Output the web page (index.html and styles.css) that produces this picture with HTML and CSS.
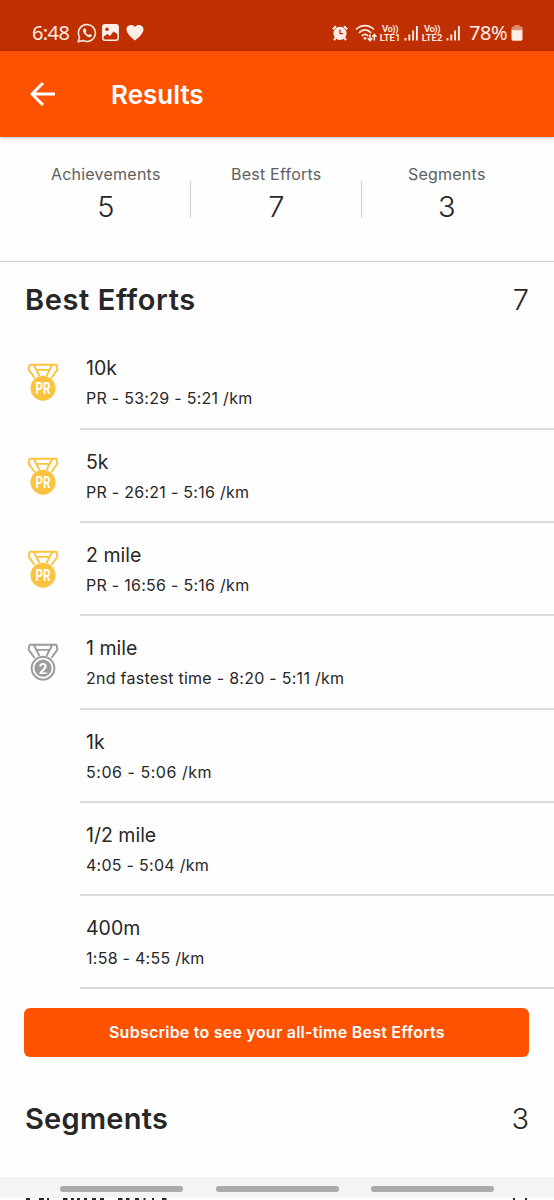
FILE: index.html
```html
<!DOCTYPE html>
<html lang="en">
<head>
<meta charset="utf-8">
<title>Results</title>
<link rel="stylesheet" href="styles.css">
</head>
<body>
<header class="status">
  <span class="clock">6:48</span>
  <svg class="i-wa" viewBox="0 0 20 20"><path d="M1.2 18.8l1.3-4.7A8.5 8.5 0 1 1 6 17.5z" fill="none" stroke="currentColor" stroke-width="1.6" stroke-linejoin="round"/><path d="M6.9 5.4c-1.5 1-1.3 3.3.6 5.5s4.3 3.7 5.700 3.300 1.900-1.500 1.600-2.100l-2.100-1.100-1.200 1.100c-1.300-.5-2.400-1.600-2.900-2.800l.9-1.100-.9-2.400c-.4-.6-1.200-.7-1.700-.4z" fill="currentColor"/></svg>
  <svg class="i-pic" viewBox="0 0 17 17"><rect x=".8" y=".8" width="15.4" height="15.4" rx="2.2" fill="none" stroke="currentColor" stroke-width="1.5"/><path d="M1 1h15v9.500l-4.500-3-3.500 4.500-2.500-2L1 13z" fill="currentColor"/><circle cx="5" cy="5.3" r="1.7" class="cut"/></svg>
  <svg class="i-heart" viewBox="0 0 18 17"><path d="M9 16.500C5 13.500.5 9.500.5 5.300.5 1 6.500-.8 9 3c2.500-3.800 8.500-2 8.500 2.300 0 4.200-4.500 8.200-8.500 11.200z" fill="currentColor"/></svg>
  <span class="grow"></span>
  <svg class="i-alarm" viewBox="0 0 16 16"><circle cx="8" cy="8.3" r="6.6" fill="currentColor"/><path d="M.8 4.200L4 1.200M15.200 4.200L12 1.200M3.800 12.500L2 15.200M12.200 12.500L14 15.200" stroke="currentColor" stroke-width="2"/><path d="M8 4.500V8.700H11" fill="none" stroke="#bf2f00" stroke-width="1.300"/></svg>
  <svg class="i-wifi" viewBox="0 0 22 18"><path d="M1 5.500C6 .2 14 .2 19 5.500M4 8.800C7.500 5 12.500 5 16 8.800M6.800 12c2-2.200 4.400-2.200 6.400 0" fill="none" stroke="currentColor" stroke-width="1.700"/><circle cx="10" cy="14.300" r="1.400" fill="currentColor"/><path d="M15 10.500v6M12.700 14.300L15 16.700l2.300-2.400M19.300 16.500v-6M17.300 12.700l2-2.300 2.200 2.300" fill="none" stroke="currentColor" stroke-width="1.500"/></svg>
  <span class="lte"><b>Vo))</b><b>LTE1</b></span>
  <svg class="i-bars" viewBox="0 0 15 16"><path d="M1.500 13v2.500M5.300 9.500v6M9.100 5.500v10M12.900 1v14.500"/></svg>
  <span class="lte"><b>Vo))</b><b>LTE2</b></span>
  <svg class="i-bars" viewBox="0 0 15 16"><path d="M1.500 13v2.500M5.300 9.500v6M9.100 5.500v10M12.900 1v14.500"/></svg>
  <span class="pct">78%</span>
  <svg class="i-batt" viewBox="0 0 12 16"><path d="M3.500 0h5v1.500H10a1.500 1.500 0 0 1 1.500 1.500v3H.5V3A1.500 1.500 0 0 1 2 1.500h1.500z" fill="currentColor" opacity=".5"/><path d="M.5 5.200h11V14A1.700 1.700 0 0 1 9.800 15.700H2.200A1.700 1.700 0 0 1 .5 14z" fill="currentColor"/></svg>
</header>

<nav class="appbar">
  <svg class="back" viewBox="0 0 26 26"><path d="M25 13H2.500M13 2L2 13l11 11" fill="none" stroke="currentColor" stroke-width="3"/></svg>
  <h1>Results</h1>
</nav>

<section class="stats">
  <div class="stat"><span class="label">Achievements</span><span class="num">5</span></div>
  <div class="stat"><span class="label">Best Efforts</span><span class="num">7</span></div>
  <div class="stat"><span class="label">Segments</span><span class="num">3</span></div>
</section>

<section class="efforts">
  <div class="head"><h2 class="wide">Best Efforts</h2><span class="num">7</span></div>
  <ul>
    <li><svg class="medal gold" viewBox="0 0 32 40"><path class="ribbon" d="M2.500 2.700H29.500L30.400 7.600L24.400 16M2.500 2.700L1.600 7.600L7.600 16M6.700 2.700L12.500 14M25.300 2.700L19.500 14M9.500 7.900H22.500"/><circle cx="16" cy="26.200" r="12.500"/><text x="16" y="32" textLength="15" lengthAdjust="spacingAndGlyphs">PR</text></svg><div class="row"><p class="name">10k</p><p class="time">PR - 53:29 - 5:21 /km</p></div></li>
    <li><svg class="medal gold" viewBox="0 0 32 40"><path class="ribbon" d="M2.500 2.700H29.500L30.400 7.600L24.400 16M2.500 2.700L1.600 7.600L7.600 16M6.700 2.700L12.500 14M25.300 2.700L19.500 14M9.500 7.900H22.500"/><circle cx="16" cy="26.200" r="12.500"/><text x="16" y="32" textLength="15" lengthAdjust="spacingAndGlyphs">PR</text></svg><div class="row"><p class="name">5k</p><p class="time">PR - 26:21 - 5:16 /km</p></div></li>
    <li><svg class="medal gold" viewBox="0 0 32 40"><path class="ribbon" d="M2.500 2.700H29.500L30.400 7.600L24.400 16M2.500 2.700L1.600 7.600L7.600 16M6.700 2.700L12.500 14M25.300 2.700L19.500 14M9.500 7.900H22.500"/><circle cx="16" cy="26.200" r="12.500"/><text x="16" y="32" textLength="15" lengthAdjust="spacingAndGlyphs">PR</text></svg><div class="row"><p class="name">2 mile</p><p class="time">PR - 16:56 - 5:16 /km</p></div></li>
    <li><svg class="medal silver" viewBox="0 0 32 40"><path class="ribbon" d="M2.500 2.700H29.500L30.400 7.600L24.400 16M2.500 2.700L1.600 7.600L7.600 16M6.700 2.700L12.500 14M25.300 2.700L19.500 14M9.500 7.900H22.500"/><circle class="ring" cx="16" cy="26.200" r="11.400"/><circle cx="16" cy="26.200" r="8.600"/><text x="16" y="31.700">2</text></svg><div class="row"><p class="name">1 mile</p><p class="time">2nd fastest time - 8:20 - 5:11 /km</p></div></li>
    <li><div class="row"><p class="name">1k</p><p class="time round">5:06 - 5:06 /km</p></div></li>
    <li><div class="row"><p class="name">1/2 mile</p><p class="time">4:05 - 5:04 /km</p></div></li>
    <li><div class="row"><p class="name">400m</p><p class="time">1:58 - 4:55 /km</p></div></li>
  </ul>
  <button class="subscribe">Subscribe to see your all-time Best Efforts</button>
</section>

<section class="segments">
  <div class="head"><h2>Segments</h2><span class="num">3</span></div>
</section>

<footer class="navbar"><div class="keys"><i></i><i></i><i></i></div>
  <svg class="edge" viewBox="0 0 554 2"><path d="M26 1h4M39 1h5M47 1h2M63 1h4.500M71 1h3M77 1h3M84 1h3M92 1h4M100 1h4M118 1h4.500M126 1h3.500M135 1h4M143.500 1h2M152 1h2M162 1h4.500M513 1h2M525 1h2" stroke="#272727" stroke-width="2"/></svg>
</footer>
</body>
</html>
```
FILE: styles.css
```css
* { box-sizing: border-box; margin: 0; padding: 0; }
html { height: 1200px; overflow: hidden; }
body { width: 554px; height: 1200px; overflow: hidden; display: flex; flex-direction: column; background: #fefefe; color: #272727; font-family: Inter, "Liberation Sans", sans-serif; }
svg { display: block; flex: none; }

.status { flex: none; height: 51px; padding: 14px 31px 0 32px; display: flex; align-items: center; background: #bf2f00; color: #ffede6; }
.clock, .pct { font-family: "Noto Sans", sans-serif; font-size: 20px; line-height: 24px; }
.clock { width: 45px; letter-spacing: -0.6px; }
.i-wa { width: 20px; height: 20px; }
.i-pic { width: 17px; height: 17px; margin-left: 5px; }
.cut { fill: #bf2f00; }
.i-heart { width: 18px; height: 17px; margin-left: 7px; }
.grow { flex: 1; }
.i-alarm { width: 16px; height: 16px; margin-right: 7px; }
.i-wifi { width: 22px; height: 18px; }
.lte { display: flex; flex-direction: column; width: 22px; margin-left: 2px; font: 500 9.5px/9px Roboto, sans-serif; text-align: center; white-space: nowrap; }
.lte b { font-weight: 600; }
.lte b:first-child { letter-spacing: -.5px; }
.i-bars { width: 15px; height: 16px; margin-left: 3px; fill: none; stroke: currentColor; stroke-width: 1.9px; }
.pct { width: 39px; margin-left: 8px; letter-spacing: -0.4px; }
.i-batt { width: 12px; height: 16px; margin-left: 3px; }

.appbar { flex: none; height: 86px; padding-left: 30px; display: flex; align-items: center; background: #fd5200; color: #fff; box-shadow: 0 1px 3px rgba(0,0,0,.25); }
.back { width: 26px; height: 26px; }
h1 { margin-left: 55px; padding-top: 2px; font-size: 26px; font-weight: 600; line-height: 32px; }

.stats { flex: none; height: 125px; padding: 27px 22px 0 20.5px; display: grid; grid-template-columns: 1fr 1fr 1fr; border-bottom: 1px solid #cfcfcf; }
.stat { display: flex; flex-direction: column; align-items: center; height: 61px; background: linear-gradient(#d0d0d0, #d0d0d0) right 17px / 1px 37px no-repeat; }
.stat:last-child { background: none; }
.label { font-size: 16px; line-height: 20px; letter-spacing: .24px; color: #606060; }
.num { font-size: 29px; line-height: 36px; font-weight: 300; }
.stat .num { margin-top: 5px; }

.head { display: flex; justify-content: space-between; padding: 1px 25px 0; height: 75px; align-items: center; }
h2 { font-size: 29px; font-weight: 600; line-height: 36px; letter-spacing: .25px; }
h2.wide { letter-spacing: .6px; }
ul { list-style: none; margin-top: -.6px; }
li { display: flex; justify-content: flex-end; height: 93.3px; }
.medal { width: 32px; height: 40px; margin: 26px 21px 0 0; fill: currentColor; }
.ribbon, .ring { fill: none; stroke: currentColor; stroke-width: 1.9px; stroke-linejoin: round; }
.gold { color: #fcc340; }
.silver { color: #9c9c9c; }
.medal text { font: 700 16px Roboto, sans-serif; fill: #fff; text-anchor: middle; }
.silver text { font-size: 15px; }
.row { width: 474px; padding: 19px 0 0 6px; border-bottom: 2px solid #dcdcdc; white-space: nowrap; }
.name { font-size: 19.5px; line-height: 26px; font-weight: 400; letter-spacing: 0; }
.time { font-size: 16px; line-height: 22px; margin-top: 6px; font-weight: 400; letter-spacing: .27px; }
.time.round { letter-spacing: .53px; }
.subscribe { display: block; width: 505px; height: 49px; margin: 18.6px 0 0 24.4px; border: 0; border-radius: 6px; background: #fd5200; color: #fff; font: 600 16px/49px Inter, sans-serif; letter-spacing: .24px; }
.segments { margin-top: 24px; }

.navbar { flex: none; height: 23px; margin-top: auto; padding-top: 9px; display: flex; flex-direction: column; justify-content: space-between; background: #f4f4f6; }
.keys { display: flex; justify-content: space-between; padding: 0 60px; }
.keys i { width: 123px; height: 6px; border-radius: 3px; background: #aaa; }
.edge { width: 554px; height: 2px; background: #fefefe; }
```
